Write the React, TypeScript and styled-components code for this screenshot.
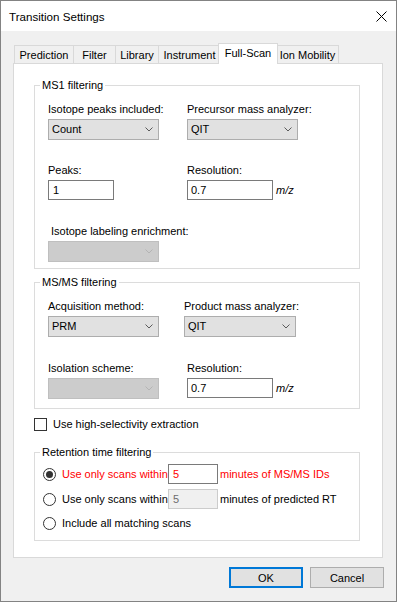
import styled, { createGlobalStyle, css } from 'styled-components';

const GlobalStyle = createGlobalStyle`
  html, body {
    margin: 0;
    padding: 0;
    background: #ffffff;
  }
  body {
    font-family: "Liberation Sans", Arial, sans-serif;
    font-size: 11px;
    color: #000000;
  }
  * {
    box-sizing: border-box;
  }
`;

const TABS = [
  { label: 'Prediction', width: 60 },
  { label: 'Filter', width: 43 },
  { label: 'Library', width: 44 },
  { label: 'Instrument', width: 63 },
  { label: 'Full-Scan', width: 60, selected: true },
  { label: 'Ion Mobility', width: 63 },
];

const Chevron = ({ color }: { color: string }) => (
  <svg width="8" height="5" viewBox="0 0 8 5">
    <polyline points="0.5,0.5 4,4 7.5,0.5" fill="none" stroke={color} strokeWidth="1" />
  </svg>
);

const CloseIcon = () => (
  <svg width="11" height="11" viewBox="0 0 11 11">
    <line x1="0.5" y1="0.5" x2="10.5" y2="10.5" stroke="#000" strokeWidth="1" />
    <line x1="10.5" y1="0.5" x2="0.5" y2="10.5" stroke="#000" strokeWidth="1" />
  </svg>
);

type ComboProps = { value?: string; width: number; disabled?: boolean };

const Combo = ({ value, width, disabled }: ComboProps) => (
  <StyledCombo $width={width} $disabled={disabled}>
    <StyledComboText>{value}</StyledComboText>
    <StyledComboArrow>
      <Chevron color={disabled ? '#b4b4b4' : '#5a5a5a'} />
    </StyledComboArrow>
  </StyledCombo>
);

const App = () => {
  return (
    <>
      <GlobalStyle />
      <StyledWindow>
        <StyledTitleBar>
          <StyledTitle>Transition Settings</StyledTitle>
          <CloseIcon />
        </StyledTitleBar>
        <StyledBody>
          <StyledTabStrip>
            {TABS.map((tab, i) => (
              <StyledTab key={tab.label} $width={tab.width} $selected={tab.selected} $first={i === 0} $afterSelected={i > 0 && TABS[i - 1].selected}>
                {tab.label}
              </StyledTab>
            ))}
          </StyledTabStrip>
          <StyledPanel>
            <StyledGroup>
              <StyledLegend>MS1 filtering</StyledLegend>
              <StyledGroupGrid $pad="8px 0 6px 13px" $col={139} $gap={22}>
                <StyledField>
                  <StyledLabel>Isotope peaks included:</StyledLabel>
                  <Combo value="Count" width={111} />
                </StyledField>
                <StyledField>
                  <StyledLabel>Precursor mass analyzer:</StyledLabel>
                  <Combo value="QIT" width={111} />
                </StyledField>
                <StyledField>
                  <StyledLabel>Peaks:</StyledLabel>
                  <StyledTextBox $width={66} $pad={4}>1</StyledTextBox>
                </StyledField>
                <StyledField>
                  <StyledLabel>Resolution:</StyledLabel>
                  <StyledInline>
                    <StyledTextBox $width={86}>0.7</StyledTextBox>
                    <StyledUnit>m/z</StyledUnit>
                  </StyledInline>
                </StyledField>
                <StyledField $top={1}>
                  <StyledLabel $indent={3}>Isotope labeling enrichment:</StyledLabel>
                  <Combo width={111} disabled />
                </StyledField>
              </StyledGroupGrid>
            </StyledGroup>

            <StyledGroup $top={5}>
              <StyledLegend>MS/MS filtering</StyledLegend>
              <StyledGroupGrid $pad="8px 0 9px 13px" $col={136} $gap={23}>
                <StyledField>
                  <StyledLabel>Acquisition method:</StyledLabel>
                  <Combo value="PRM" width={111} />
                </StyledField>
                <StyledField>
                  <StyledLabel>Product mass analyzer:</StyledLabel>
                  <Combo value="QIT" width={112} />
                </StyledField>
                <StyledField>
                  <StyledLabel>Isolation scheme:</StyledLabel>
                  <Combo width={111} disabled />
                </StyledField>
                <StyledField $indent={3}>
                  <StyledLabel>Resolution:</StyledLabel>
                  <StyledInline>
                    <StyledTextBox $width={86}>0.7</StyledTextBox>
                    <StyledUnit>m/z</StyledUnit>
                  </StyledInline>
                </StyledField>
              </StyledGroupGrid>
            </StyledGroup>

            <StyledCheckRow>
              <StyledCheckbox />
              <span>Use high-selectivity extraction</span>
            </StyledCheckRow>

            <StyledGroup $top={12}>
              <StyledLegend>Retention time filtering</StyledLegend>
              <StyledRadioList>
                <StyledRadioRow $red>
                  <StyledRadio $checked />
                  <StyledRadioLabel $width={106}>Use only scans within</StyledRadioLabel>
                  <StyledTextBox $width={50} $red $pad={4}>5</StyledTextBox>
                  <StyledRadioTail>minutes of MS/MS IDs</StyledRadioTail>
                </StyledRadioRow>
                <StyledRadioRow>
                  <StyledRadio />
                  <StyledRadioLabel $width={106}>Use only scans within</StyledRadioLabel>
                  <StyledTextBox $width={50} $disabled $pad={4}>5</StyledTextBox>
                  <StyledRadioTail>minutes of predicted RT</StyledRadioTail>
                </StyledRadioRow>
                <StyledRadioRow $top={-1}>
                  <StyledRadio />
                  <StyledRadioLabel>Include all matching scans</StyledRadioLabel>
                </StyledRadioRow>
              </StyledRadioList>
            </StyledGroup>
          </StyledPanel>
          <StyledButtonRow>
            <StyledButton $default>OK</StyledButton>
            <StyledButton>Cancel</StyledButton>
          </StyledButtonRow>
        </StyledBody>
      </StyledWindow>
    </>
  );
};

const StyledWindow = styled.div`
  width: 397px;
  height: 602px;
  border: 1px solid #838383;
  display: flex;
  flex-direction: column;
  background: #f0f0f0;
  overflow: hidden;
`;

const StyledTitleBar = styled.div`
  height: 30px;
  flex: none;
  background: #ffffff;
  display: flex;
  align-items: center;
  justify-content: space-between;
  padding: 0 9px 0 8px;
`;

const StyledTitle = styled.span`
  font-family: "Liberation Sans", Arial, sans-serif;
  font-size: 11.6px;
  color: #000000;
`;

const StyledBody = styled.div`
  flex: 1;
  display: flex;
  flex-direction: column;
  padding: 12px 12px 0 12px;
`;

const StyledTabStrip = styled.div`
  display: flex;
  align-items: flex-end;
  height: 20px;
  padding-left: 1px;
`;

const StyledTab = styled.div<{ $width: number; $selected?: boolean; $first?: boolean; $afterSelected?: boolean }>`
  width: ${(p) => p.$width}px;
  height: 18px;
  margin-left: ${(p) => (p.$first ? 0 : p.$afterSelected ? -2 : -1)}px;
  border: 1px solid #d9d9d9;
  border-bottom: none;
  background: #f0f0f0;
  display: flex;
  align-items: center;
  justify-content: center;
  white-space: nowrap;
  ${(p) => p.$selected && css`
    height: 21px;
    margin-left: -3px;
    margin-bottom: -1px;
    padding-bottom: 2px;
    background: #ffffff;
    position: relative;
    z-index: 1;
  `}
`;

const StyledPanel = styled.div`
  background: #ffffff;
  border: 1px solid #d9d9d9;
  margin-right: 1px;
  padding: 13px 22px 16px 20px;
  display: flex;
  flex-direction: column;
`;

const StyledGroup = styled.fieldset<{ $top?: number }>`
  margin: ${(p) => p.$top ?? 0}px 0 0 0;
  padding: 0;
  border: 1px solid #dcdcdc;
  min-width: 0;
`;

const StyledLegend = styled.legend`
  margin-left: 5px;
  padding: 0 2px;
  line-height: 16px;
  font-size: 11px;
`;

const StyledGroupGrid = styled.div<{ $pad: string; $col: number; $gap: number }>`
  display: grid;
  grid-template-columns: ${(p) => p.$col}px 1fr;
  row-gap: ${(p) => p.$gap}px;
  padding: ${(p) => p.$pad};
`;

const StyledField = styled.div<{ $indent?: number; $top?: number }>`
  display: flex;
  flex-direction: column;
  align-items: flex-start;
  gap: 2px;
  margin-left: ${(p) => p.$indent ?? 0}px;
  margin-top: ${(p) => p.$top ?? 0}px;
`;

const StyledLabel = styled.span<{ $indent?: number }>`
  line-height: 16px;
  white-space: nowrap;
  margin-left: ${(p) => p.$indent ?? 0}px;
`;

const StyledCombo = styled.div<{ $width: number; $disabled?: boolean }>`
  width: ${(p) => p.$width}px;
  height: 21px;
  display: flex;
  align-items: center;
  background: ${(p) => (p.$disabled ? '#cccccc' : '#e1e1e1')};
  border: 1px solid ${(p) => (p.$disabled ? '#bfbfbf' : '#adadad')};
`;

const StyledComboText = styled.span`
  flex: 1;
  padding-left: 3px;
  line-height: 19px;
`;

const StyledComboArrow = styled.span`
  width: 18px;
  display: flex;
  align-items: center;
  justify-content: center;
`;

const StyledTextBox = styled.div<{ $width: number; $red?: boolean; $disabled?: boolean; $pad?: number }>`
  width: ${(p) => p.$width}px;
  height: 20px;
  padding-left: ${(p) => p.$pad ?? 3}px;
  line-height: 18px;
  background: ${(p) => (p.$disabled ? '#f0f0f0' : '#ffffff')};
  border: 1px solid ${(p) => (p.$disabled ? '#cccccc' : '#7a7a7a')};
  color: ${(p) => (p.$red ? '#ff0000' : p.$disabled ? '#6d6d6d' : '#000000')};
`;

const StyledInline = styled.div`
  display: flex;
  align-items: center;
`;

const StyledUnit = styled.span`
  margin-left: 3px;
  font-style: italic;
`;

const StyledCheckRow = styled.label`
  margin-top: 7px;
  height: 16px;
  display: flex;
  align-items: center;
  gap: 6px;
`;

const StyledCheckbox = styled.span`
  width: 13px;
  height: 13px;
  border: 1px solid #333333;
  background: #ffffff;
`;

const StyledRadioList = styled.div`
  display: flex;
  flex-direction: column;
  gap: 5px;
  padding: 4px 0 7px 8px;
`;

const StyledRadioRow = styled.div<{ $red?: boolean; $top?: number }>`
  display: flex;
  align-items: center;
  height: 20px;
  margin-top: ${(p) => p.$top ?? 0}px;
  color: ${(p) => (p.$red ? '#ff0000' : '#000000')};
  white-space: nowrap;
`;

const StyledRadio = styled.span<{ $checked?: boolean }>`
  width: 13px;
  height: 13px;
  flex: none;
  border: 1px solid #333333;
  border-radius: 50%;
  background: #ffffff;
  margin-right: 6px;
  display: flex;
  align-items: center;
  justify-content: center;
  &::after {
    content: '';
    width: 7px;
    height: 7px;
    border-radius: 50%;
    background: ${(p) => (p.$checked ? '#333333' : 'transparent')};
  }
`;

const StyledRadioLabel = styled.span<{ $width?: number }>`
  ${(p) => p.$width && css`width: ${p.$width}px;`}
`;

const StyledRadioTail = styled.span`
  margin-left: 2px;
`;

const StyledButtonRow = styled.div`
  display: flex;
  justify-content: flex-end;
  gap: 7px;
  margin-top: 9px;
`;

const StyledButton = styled.div<{ $default?: boolean }>`
  width: 74px;
  height: 21px;
  display: flex;
  align-items: center;
  justify-content: center;
  background: #e1e1e1;
  border: ${(p) => (p.$default ? '2px solid #0078d7' : '1px solid #adadad')};
`;

export default App;
